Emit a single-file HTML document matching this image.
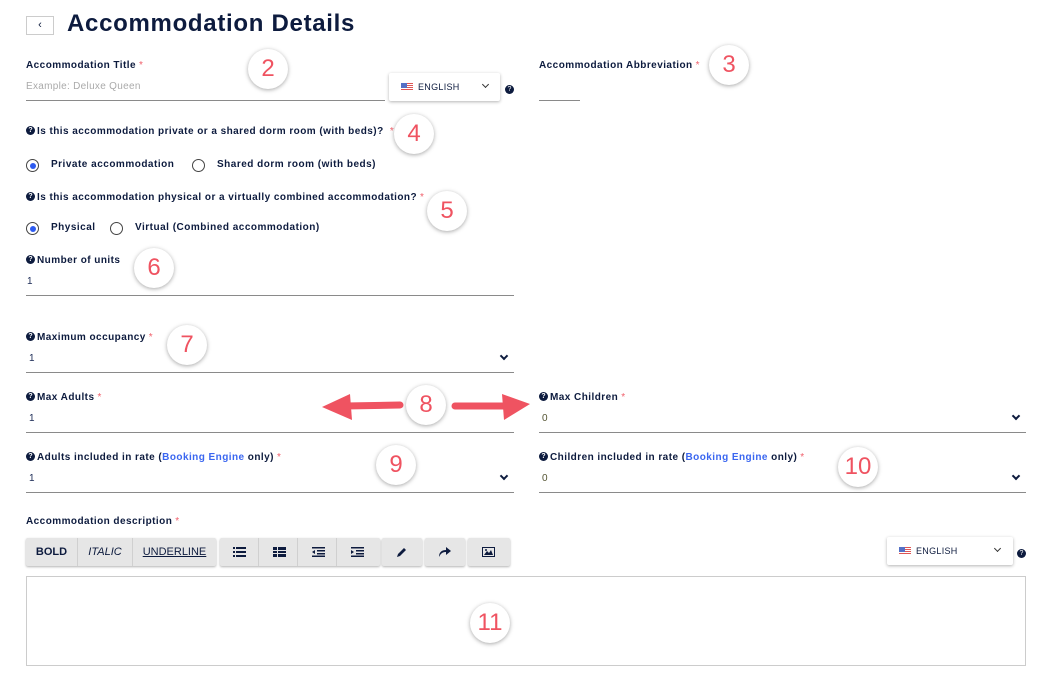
<!DOCTYPE html>
<html><head><meta charset="utf-8"><style>
*{margin:0;padding:0;box-sizing:border-box}
body{width:1060px;height:681px;background:#fff;font-family:"Liberation Sans",sans-serif;color:#0d1b3e;position:relative;overflow:hidden}
.a{position:absolute;white-space:nowrap}
.lbl{font-size:10px;font-weight:bold;letter-spacing:.45px}
.req{color:#f0606b;font-weight:normal;margin-left:3px}
.q{display:inline-block;width:9px;height:9px;border-radius:50%;background:#0d1b3e;color:#fff;font-size:7px;line-height:9px;text-align:center;vertical-align:middle;margin-right:2px;letter-spacing:0;position:relative;top:-1px}
.val{font-size:10px;color:#1b2a55}
.line{position:absolute;height:1px;background:#8a8a8a}
.chev{position:absolute;width:6px;height:6px;border-right:2px solid #0d1b3e;border-bottom:2px solid #0d1b3e;transform:rotate(45deg)}
.radio{position:absolute;width:13px;height:13px;border:1px solid #444;border-radius:50%}
.radio.on::after{content:"";position:absolute;left:2.5px;top:2.5px;width:6px;height:6px;border-radius:50%;background:#2d5bf0}
.rl{font-size:10px;font-weight:bold;letter-spacing:.5px}
.num{position:absolute;width:40px;height:40px;border-radius:50%;background:#fff;box-shadow:0 1px 4px rgba(0,0,0,.35);color:#ef5361;font-size:24px;text-align:center;line-height:40px}
.dd{position:absolute;background:#fff;box-shadow:0 1px 3px rgba(0,0,0,.3);border-radius:2px;font-size:9px;letter-spacing:.3px}
.flag{position:absolute;width:12px;height:8px;background:repeating-linear-gradient(#d55 0 1px,#fff 1px 2px)}
.flag::before{content:"";position:absolute;left:0;top:0;width:6px;height:5px;background:#5470c6}
.sm{position:absolute;width:5px;height:5px;border-right:1px solid #333;border-bottom:1px solid #333;transform:rotate(45deg)}
.tb{position:absolute;top:538px;height:28px;background:#e6e6e6;box-shadow:0 1px 2px rgba(0,0,0,.3);border-radius:2px;font-size:11px;line-height:28px;text-align:center}
.sep{position:absolute;top:0;width:1px;height:28px;background:#d0d0d0}
.blue{color:#3a66f0;font-weight:bold}
</style></head><body>
<div class="a" style="left:26px;top:16px;width:28px;height:19px;border:1px solid #ccc;font-size:11px;text-align:center;line-height:16px">‹</div>
<div class="a" style="left:67px;top:10px;font-size:24px;font-weight:bold;letter-spacing:.7px">Accommodation Details</div>

<div class="a lbl" style="left:26px;top:60px">Accommodation Title<span class="req">*</span></div>
<div class="a" style="left:26px;top:81px;font-size:10px;color:#aaa;letter-spacing:.3px">Example: Deluxe Queen</div>
<div class="line" style="left:26px;top:100px;width:359px"></div>
<div class="dd" style="left:389px;top:73px;width:111px;height:28px"><div class="flag" style="left:12px;top:10px"></div><span class="a" style="left:29px;top:9px">ENGLISH</span><div class="sm" style="left:94px;top:9px"></div></div>
<div class="a" style="left:505px;top:82px"><span class="q">?</span></div>
<div class="a lbl" style="left:539px;top:60px">Accommodation Abbreviation<span class="req">*</span></div>
<div class="line" style="left:539px;top:100px;width:41px"></div>

<div class="a lbl" style="left:26px;top:126px"><span class="q">?</span>Is this accommodation private or a shared dorm room (with beds)? <span class="req">*</span></div>
<div class="radio on" style="left:26px;top:159px"></div><div class="a rl" style="left:51px;top:159px">Private accommodation</div>
<div class="radio" style="left:192px;top:159px"></div><div class="a rl" style="left:217px;top:159px">Shared dorm room (with beds)</div>
<div class="a lbl" style="left:26px;top:192px"><span class="q">?</span>Is this accommodation physical or a virtually combined accommodation?<span class="req">*</span></div>
<div class="radio on" style="left:26px;top:222px"></div><div class="a rl" style="left:51px;top:222px">Physical</div>
<div class="radio" style="left:110px;top:222px"></div><div class="a rl" style="left:135px;top:222px">Virtual (Combined accommodation)</div>

<div class="a lbl" style="left:26px;top:255px"><span class="q">?</span>Number of units</div>
<div class="a val" style="left:27px;top:276px">1</div>
<div class="line" style="left:26px;top:295px;width:488px"></div>

<div class="a lbl" style="left:26px;top:332px"><span class="q">?</span>Maximum occupancy<span class="req">*</span></div>
<div class="a val" style="left:29px;top:353px">1</div>
<div class="chev" style="left:501px;top:353px"></div>
<div class="line" style="left:26px;top:372px;width:488px"></div>

<div class="a lbl" style="left:26px;top:392px"><span class="q">?</span>Max Adults<span class="req">*</span></div>
<div class="a val" style="left:29px;top:413px">1</div>
<div class="line" style="left:26px;top:432px;width:488px"></div>
<div class="a lbl" style="left:539px;top:392px"><span class="q">?</span>Max Children<span class="req">*</span></div>
<div class="a val" style="left:542px;top:413px;color:#553">0</div>
<div class="chev" style="left:1013px;top:413px"></div>
<div class="line" style="left:539px;top:432px;width:487px"></div>

<div class="a lbl" style="left:26px;top:452px"><span class="q">?</span>Adults included in rate (<span class="blue">Booking Engine</span> only)<span class="req">*</span></div>
<div class="a val" style="left:29px;top:473px">1</div>
<div class="chev" style="left:501px;top:473px"></div>
<div class="line" style="left:26px;top:492px;width:488px"></div>
<div class="a lbl" style="left:539px;top:452px"><span class="q">?</span>Children included in rate (<span class="blue">Booking Engine</span> only)<span class="req">*</span></div>
<div class="a val" style="left:542px;top:473px;color:#553">0</div>
<div class="chev" style="left:1013px;top:473px"></div>
<div class="line" style="left:539px;top:492px;width:487px"></div>

<div class="a lbl" style="left:26px;top:516px">Accommodation description<span class="req">*</span></div>
<div class="tb" style="left:26px;width:190px"><span class="a" style="left:0;width:51px;font-weight:bold">BOLD</span><div class="sep" style="left:51px"></div><span class="a" style="left:52px;width:54px;font-style:italic">ITALIC</span><div class="sep" style="left:106px"></div><span class="a" style="left:107px;width:83px;text-decoration:underline">UNDERLINE</span></div>
<div class="tb" style="left:220px;width:160px">
<svg class="a" style="left:13px;top:9px" width="13" height="10"><g fill="#0d1b3e"><rect x="0" y="0" width="2" height="2"/><rect x="3" y="0" width="10" height="2"/><rect x="0" y="4" width="2" height="2"/><rect x="3" y="4" width="10" height="2"/><rect x="0" y="8" width="2" height="2"/><rect x="3" y="8" width="10" height="2"/></g></svg>
<div class="sep" style="left:38px"></div>
<svg class="a" style="left:53px;top:9px" width="13" height="10"><g fill="#0d1b3e"><rect x="0" y="0" width="4" height="3"/><rect x="5" y="0" width="8" height="3"/><rect x="0" y="4" width="4" height="2"/><rect x="5" y="4" width="8" height="2"/><rect x="0" y="7" width="4" height="3"/><rect x="5" y="7" width="8" height="3"/></g></svg>
<div class="sep" style="left:77px"></div>
<svg class="a" style="left:92px;top:9px" width="13" height="10"><g fill="#0d1b3e"><rect x="0" y="0" width="13" height="1.5"/><rect x="5" y="3" width="8" height="1.5"/><rect x="5" y="6" width="8" height="1.5"/><rect x="0" y="8.5" width="13" height="1.5"/><path d="M3 3L0 5L3 7Z"/></g></svg>
<div class="sep" style="left:116px"></div>
<svg class="a" style="left:131px;top:9px" width="13" height="10"><g fill="#0d1b3e"><rect x="0" y="0" width="13" height="1.5"/><rect x="5" y="3" width="8" height="1.5"/><rect x="5" y="6" width="8" height="1.5"/><rect x="0" y="8.5" width="13" height="1.5"/><path d="M0 3L3 5L0 7Z"/></g></svg>
</div>
<div class="tb" style="left:382px;width:40px"><svg class="a" style="left:14px;top:9px" width="11" height="11"><path d="M1 10L2 7L8 1L10 3L4 9Z" fill="#0d1b3e"/></svg></div>
<div class="tb" style="left:425px;width:40px"><svg class="a" style="left:13px;top:8px" width="13" height="11"><path d="M1 11C1 6 4 4 8 4V1L13 5L8 9V6C5 6 3 7 1 11Z" fill="#0d1b3e"/></svg></div>
<div class="tb" style="left:468px;width:42px"><svg class="a" style="left:14px;top:9px" width="13" height="10"><rect x="0.5" y="0.5" width="12" height="9" fill="none" stroke="#0d1b3e"/><path d="M2 8L5 4L7 6L9 3L11 8Z" fill="#0d1b3e"/><circle cx="4" cy="3" r="1" fill="#0d1b3e"/></svg></div>
<div class="dd" style="left:887px;top:537px;width:126px;height:28px"><div class="flag" style="left:12px;top:10px"></div><span class="a" style="left:29px;top:9px">ENGLISH</span><div class="sm" style="left:108px;top:9px"></div></div>
<div class="a" style="left:1017px;top:546px"><span class="q">?</span></div>
<div class="a" style="left:26px;top:576px;width:1000px;height:90px;border:1px solid #ccc"></div>

<svg class="a" style="left:0;top:0" width="1060" height="681">
<g fill="#ef5361" stroke="#ef5361">
<line x1="400" y1="405" x2="345" y2="406" stroke-width="7" stroke-linecap="round"/>
<path d="M322 407L350 394L352 420Z" stroke="none"/>
<line x1="455" y1="406" x2="505" y2="406" stroke-width="7" stroke-linecap="round"/>
<path d="M530 404L502 394L504 420Z" stroke="none"/>
</g></svg>
<div class="num" style="left:248px;top:49px">2</div>
<div class="num" style="left:709px;top:45px">3</div>
<div class="num" style="left:394px;top:114px">4</div>
<div class="num" style="left:427px;top:191px">5</div>
<div class="num" style="left:134px;top:248px">6</div>
<div class="num" style="left:167px;top:325px">7</div>
<div class="num" style="left:406px;top:385px">8</div>
<div class="num" style="left:376px;top:445px">9</div>
<div class="num" style="left:838px;top:447px">10</div>
<div class="num" style="left:470px;top:603px">11</div>
</body></html>
